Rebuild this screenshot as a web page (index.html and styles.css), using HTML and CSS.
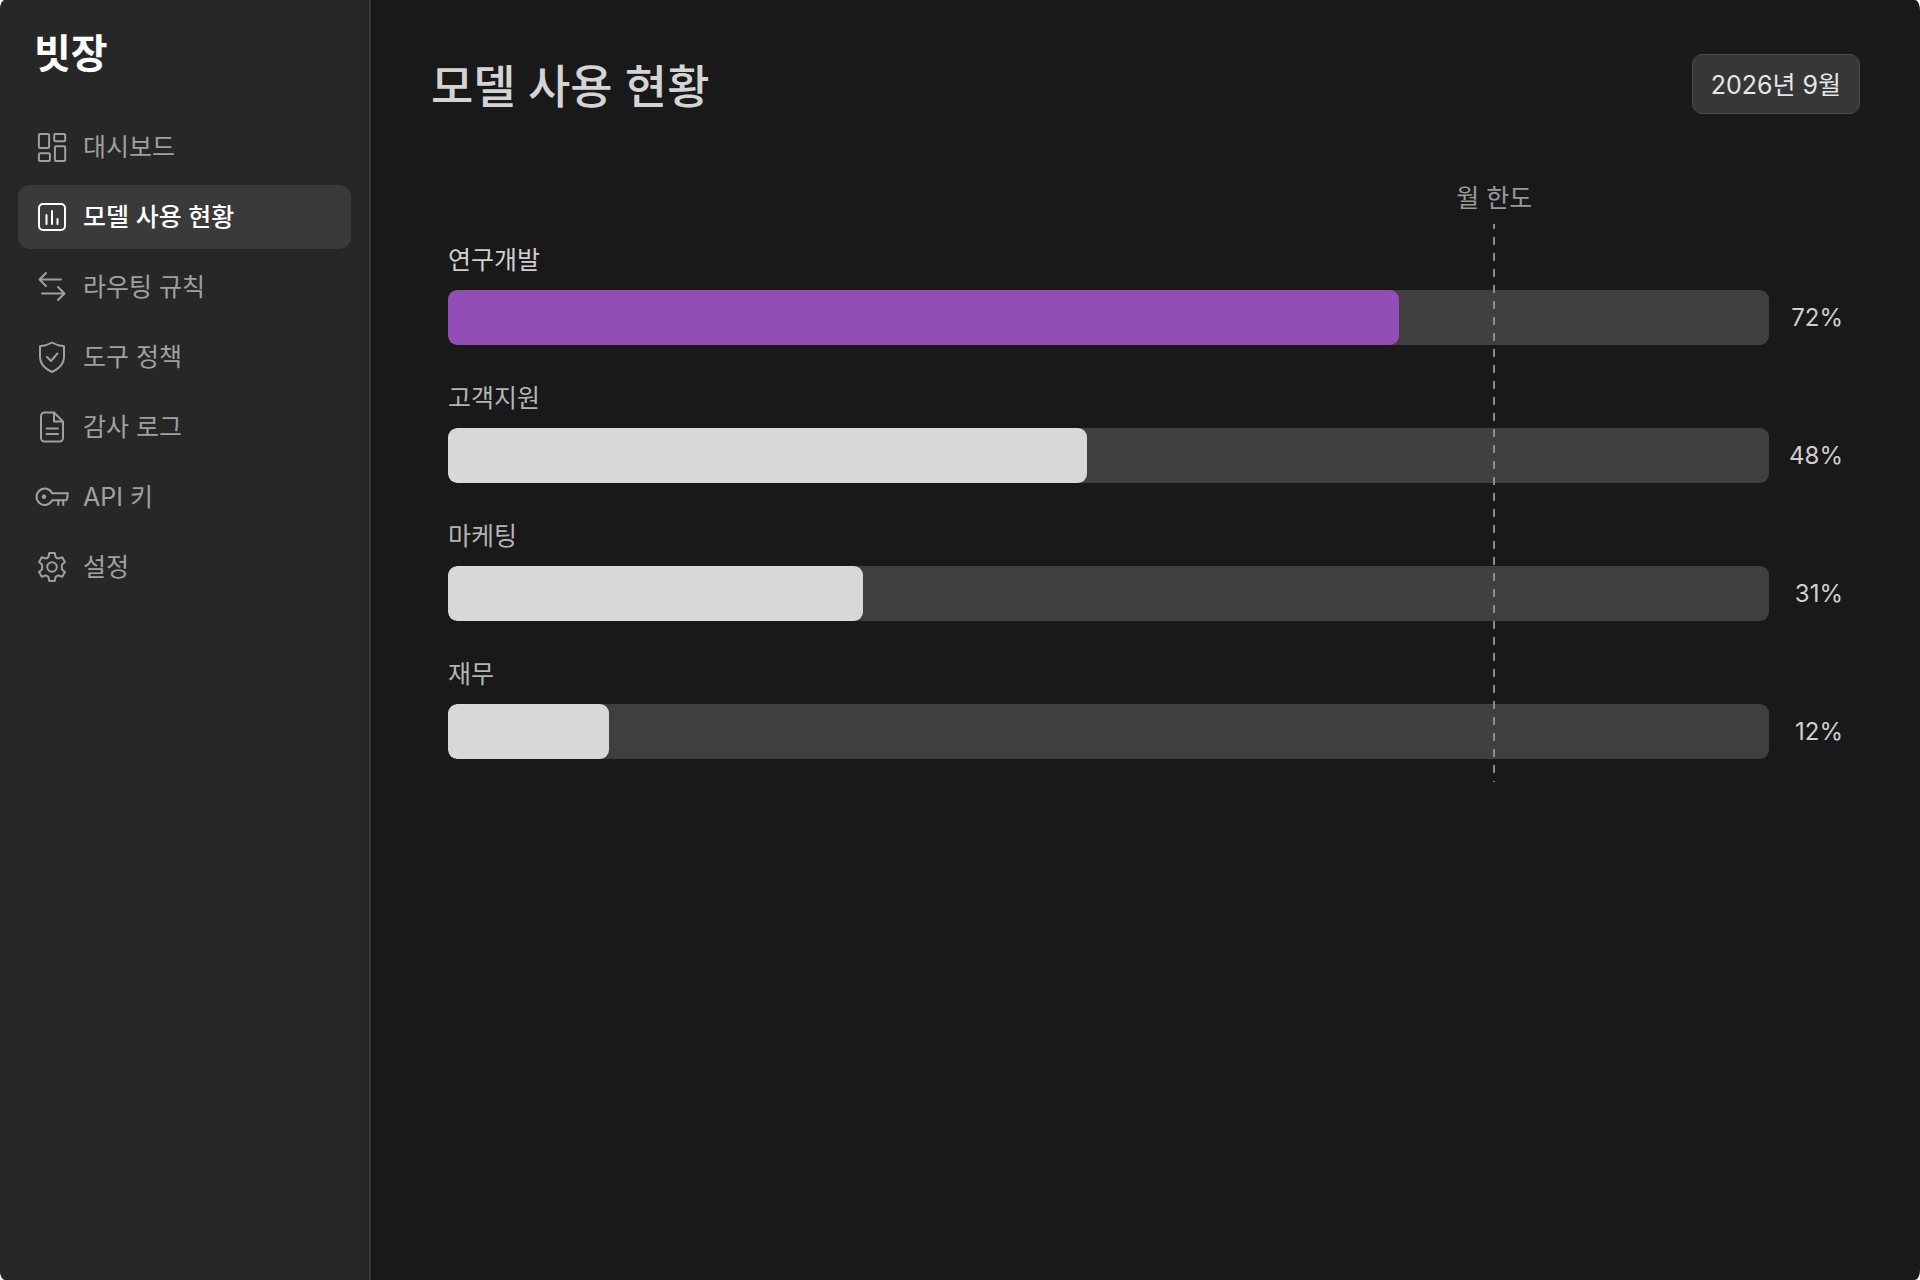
FILE: index.html
```html
<!DOCTYPE html>
<html lang="ko">
<head>
<meta charset="utf-8">
<meta name="viewport" content="width=device-width, initial-scale=1">
<title>빗장 – 모델 사용 현황</title>
<link rel="stylesheet" href="styles.css">
</head>
<body>
<div class="app">
  <aside class="sidebar">
    <div class="brand">빗장</div>
    <nav class="nav">
      <a class="nav-item" href="#dashboard">
        <svg class="icon" viewBox="0 0 32 32"><rect x="2.9" y="2.9" width="10.2" height="14" rx="1.2"/><rect x="18.2" y="2.9" width="11" height="7.4" rx="1.2"/><rect x="2.9" y="22.2" width="11" height="7.8" rx="1.2"/><rect x="18.9" y="15.2" width="10.3" height="14.8" rx="1.2"/></svg>
        <span>대시보드</span>
      </a>
      <a class="nav-item active" href="#usage" aria-current="page">
        <svg class="icon" viewBox="0 0 32 32"><rect x="3" y="3" width="26" height="26" rx="4"/><path d="M10.5 14v9M16 10v13M21.5 18v5"/></svg>
        <span>모델 사용 현황</span>
      </a>
      <a class="nav-item" href="#routing">
        <svg class="icon" viewBox="0 0 32 32"><path d="M25 8.500H3.500M10 2L3.500 8.500l6.500 6.500M6 22.500h22.500M22 16l6.500 6.500l-6.500 6.500"/></svg>
        <span>라우팅 규칙</span>
      </a>
      <a class="nav-item" href="#tools">
        <svg class="icon" viewBox="0 0 32 32"><path d="M16 1.500C12 4 8 5 4 5.300V16c0 7.500 5.500 12 12 15c6.500-3 12-7.500 12-15V5.300C24 5 20 4 16 1.500z"/><path d="M11 16l4 4l6.500-7.500"/></svg>
        <span>도구 정책</span>
      </a>
      <a class="nav-item" href="#audit">
        <svg class="icon" viewBox="0 0 32 32"><path d="M18 1.500H8.500a3.500 3.500 0 0 0-3.500 3.500v22a3.500 3.500 0 0 0 3.500 3.500h15a3.500 3.500 0 0 0 3.500-3.500V10.500zM18 1.500v9h9M10.500 17.500h11.500M10.500 23h11.500"/></svg>
        <span>감사 로그</span>
      </a>
      <a class="nav-item" href="#keys">
        <svg class="icon" viewBox="0 0 32 32"><path d="M16.200 12.300A8.200 8.200 0 1 0 16.200 19.300H29.500Q31 19.300 31.200 17L31.800 12.300z"/><path d="M22.300 19.300V24M27.300 19.300V24"/><circle class="dot" cx="8" cy="15.800" r="2.200"/></svg>
        <span>API 키</span>
      </a>
      <a class="nav-item" href="#settings">
        <svg class="icon" viewBox="0 0 32 32"><path d="M13.300 2h5.400l.9 4.100l2.500 1.500l4.100-1.400l2.700 4.700l-3 2.800v4.600l3 2.800l-2.700 4.700l-4.100-1.400l-2.500 1.500l-.9 4.100h-5.400l-.9-4.100l-2.500-1.500l-4.100 1.400l-2.700-4.700l3-2.800v-4.600l-3-2.800l2.700-4.700l4.100 1.400l2.500-1.500z"/><circle cx="16" cy="16" r="4.800"/></svg>
        <span>설정</span>
      </a>
    </nav>
  </aside>
  <main class="main">
    <header class="header">
      <h1 class="title">모델 사용 현황</h1>
      <button class="period" type="button">2026년 9월</button>
    </header>
    <section class="chart" aria-label="모델 사용 현황">
      <div class="row">
        <span class="row-label first">연구개발</span>
        <div class="track"><div class="fill accent" style="width:72%"></div></div>
        <span class="value">72%</span>
      </div>
      <div class="row">
        <span class="row-label">고객지원</span>
        <div class="track"><div class="fill" style="width:48.4%"></div></div>
        <span class="value">48%</span>
      </div>
      <div class="row">
        <span class="row-label">마케팅</span>
        <div class="track"><div class="fill" style="width:31.4%"></div></div>
        <span class="value">31%</span>
      </div>
      <div class="row">
        <span class="row-label">재무</span>
        <div class="track"><div class="fill" style="width:12.2%"></div></div>
        <span class="value">12%</span>
      </div>
      <div class="limit">
        <div class="limit-mark">
          <span class="limit-label">월 한도</span>
          <svg class="limit-line" aria-hidden="true"><line x1="1" y1="-3" x2="1" y2="100%"/></svg>
        </div>
      </div>
    </section>
  </main>
</div>
</body>
</html>
```
FILE: styles.css
```css
* {
  box-sizing: border-box;
}

body {
  margin: 0;
  background: #fff;
  color: #d6d6d6;
  font: 25px/36px Inter, "Noto Sans CJK KR", sans-serif;
}

.app {
  display: grid;
  grid-template-columns: 371px 1fr;
  min-height: 100vh;
  overflow: hidden;
  border-radius: 5px / 10px;
  background: #191919;
}

.sidebar {
  padding: 24px 18px;
  border-right: 2px solid #383838;
  background: #272727;
}

.brand {
  padding-left: 16px;
  color: #fff;
  font-size: 40px;
  font-weight: 700;
  line-height: 60px;
}

.nav {
  display: grid;
  gap: 6px;
  margin-top: 31px;
}

.nav-item {
  display: flex;
  align-items: center;
  gap: 15px;
  height: 64px;
  padding: 0 18px;
  border-radius: 12px;
  color: #a0a0a0;
  text-decoration: none;
}

.nav-item.active {
  background: #3a3a3a;
  color: #fff;
  font-weight: 500;
}

.icon {
  flex: none;
  width: 32px;
  height: 32px;
  overflow: visible;
  fill: none;
  stroke: currentColor;
  stroke-width: 2;
  stroke-linecap: round;
  stroke-linejoin: round;
}

.icon .dot {
  fill: currentColor;
  stroke: none;
}

.main {
  padding: 54px 60px;
}

.header {
  display: flex;
  align-items: center;
  justify-content: space-between;
  height: 60px;
}

.title {
  margin: 0;
  padding-top: 4px;
  color: #d4d4d4;
  font-size: 46px;
  font-weight: 500;
  line-height: 60px;
}

.period {
  height: 60px;
  padding: 2px 18px 0;
  border: 1px solid #4b4b4b;
  border-radius: 10px;
  background: #373737;
  color: #e6e6e6;
  font: inherit;
}

.chart {
  position: relative;
  display: grid;
  gap: 32px;
  margin-top: 66px;
  padding: 59px 17px 0;
}

.row {
  display: grid;
  grid-template-columns: 1fr 74px;
  align-items: center;
  row-gap: 8px;
}

.row-label {
  grid-column: 1 / -1;
  line-height: 43px;
  color: #b4b4b4;
}

.row-label.first {
  color: #d0d0d0;
}

.track {
  height: 55px;
  overflow: hidden;
  border-radius: 9px;
  background: #3f3f3f;
}

.fill {
  height: 100%;
  border-radius: 9px;
  background: #d8d8d8;
}

.fill.accent {
  background: #924db6;
}

.value {
  color: #cfcfcf;
  font-size: 24px;
  text-align: right;
}

/* Monthly cap, drawn over the tracks; the insets match the track column. */
.limit {
  position: absolute;
  inset: 0 91px -23px 17px;
  pointer-events: none;
}

.limit-mark {
  display: flex;
  flex-direction: column;
  align-items: center;
  width: 80px;
  height: 100%;
  margin-left: calc(79.2% - 40px);
}

.limit-label {
  color: #999;
  white-space: nowrap;
}

.limit-line {
  flex: 1;
  width: 2px;
  min-height: 0;
  margin-top: 8px;
  stroke: #8c8c8c;
  stroke-width: 2;
  stroke-dasharray: 8 8;
}
```
